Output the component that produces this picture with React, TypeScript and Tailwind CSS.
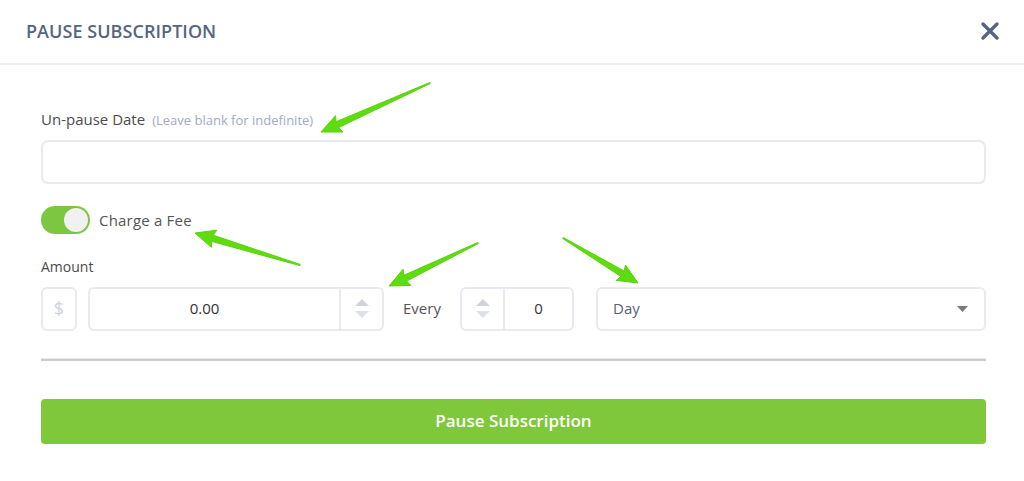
type Pt = [number, number];

// green annotation arrow, tapered shaft with a triangular head
function Arrow({ from, to }: { from: Pt; to: Pt }) {
  const [x1, y1] = from;
  const [x2, y2] = to;
  const len = Math.hypot(x2 - x1, y2 - y1);
  const ux = (x2 - x1) / len;
  const uy = (y2 - y1) / len;
  const nx = -uy;
  const ny = ux;
  const head = 18;
  const bx = x2 - ux * head;
  const by = y2 - uy * head;
  const p = (x: number, y: number) => `${x.toFixed(1)},${y.toFixed(1)}`;
  const pts = [
    p(x1 + nx * 0.6, y1 + ny * 0.6),
    p(bx + nx * 3.2, by + ny * 3.2),
    p(bx + nx * 9 - ux * 2, by + ny * 9 - uy * 2),
    p(x2, y2),
    p(bx - nx * 9 - ux * 2, by - ny * 9 - uy * 2),
    p(bx - nx * 3.2, by - ny * 3.2),
    p(x1 - nx * 0.6, y1 - ny * 0.6),
  ].join(' ');
  return <polygon points={pts} fill="#5fdc10" stroke="#58d20c" strokeWidth="1" strokeLinejoin="round" />;
}

function StepArrows() {
  return (
    <div className="flex flex-col items-center gap-[5px]">
      <svg width="14" height="7" viewBox="0 0 14 7">
        <path d="M7 0 L14 7 L0 7 Z" fill="#cfd3dc" />
      </svg>
      <svg width="14" height="7" viewBox="0 0 14 7">
        <path d="M0 0 L14 0 L7 7 Z" fill="#dde0e6" />
      </svg>
    </div>
  );
}

export default function App() {
  return (
    <div
      className="relative w-[1024px] h-[481px] bg-white overflow-hidden text-[#4a4a4a]"
      style={{ fontFamily: '"Open Sans", "Noto Sans", sans-serif' }}
    >
      {/* Header */}
      <div className="h-[65px] pl-[26px] pr-[24px] flex items-center justify-between border-b-2 border-[#e9ecf1]">
        <h2 className="text-[18px] font-semibold tracking-[0.05px] text-[#56657f]">PAUSE SUBSCRIPTION</h2>
        <svg width="20" height="20" viewBox="0 0 20 20" className="mb-[2px]">
          <path d="M3 3 L17 17 M17 3 L3 17" stroke="#56657f" strokeWidth="3.4" strokeLinecap="round" />
        </svg>
      </div>

      <div className="pl-[41px] pr-[38px] pt-[43px]">
        {/* Un-pause date */}
        <div className="flex items-baseline gap-[7px] mb-[9px]">
          <span className="text-[15px] text-[#4b4b4b]">Un-pause Date</span>
          <span className="text-[13px] text-[#a2a9c4]">(Leave blank for indefinite)</span>
        </div>
        <div className="h-[44px] w-full rounded-[7px] border-2 border-[#e8eaf0]" />

        {/* Charge a fee */}
        <div className="flex items-center gap-[9px] mt-[22px] h-[29px]">
          <div className="w-[49px] h-[28px] rounded-full bg-[#7dc740] flex items-center justify-end pr-[2px]">
            <div className="w-[24px] h-[24px] rounded-full bg-[#f1f1f1]" />
          </div>
          <span className="text-[15px] text-[#555] tracking-[0.2px]">Charge a Fee</span>
        </div>

        {/* Amount */}
        <div className="text-[14px] text-[#4b4b4b] mt-[22px] mb-[10px] leading-[20px]">Amount</div>
        <div className="flex items-center h-[44px]">
          <div className="w-[36px] h-[44px] rounded-[6px] border-2 border-[#e8eaf0] flex items-center justify-center text-[18px] text-[#cdd2de]">
            $
          </div>
          <div className="ml-[11px] w-[296px] h-[44px] rounded-[6px] border-2 border-[#e8eaf0] flex">
            <div className="flex-1 flex items-center justify-center pr-[20px] text-[15px] text-[#333]">0.00</div>
            <div className="w-[43px] border-l-2 border-[#e8eaf0] flex items-center justify-center">
              <StepArrows />
            </div>
          </div>
          <span className="ml-[19px] w-[57px] text-[15px] text-[#555]">Every</span>
          <div className="w-[114px] h-[44px] rounded-[6px] border-2 border-[#e8eaf0] flex">
            <div className="w-[43px] border-r-2 border-[#e8eaf0] flex items-center justify-center">
              <StepArrows />
            </div>
            <div className="flex-1 flex items-center justify-center text-[15px] text-[#333]">0</div>
          </div>
          <div className="ml-[22px] flex-1 h-[44px] rounded-[6px] border-2 border-[#e8eaf0] flex items-center justify-between pl-[15px] pr-[16px]">
            <span className="text-[15px] text-[#5b6172]">Day</span>
            <svg width="11" height="6" viewBox="0 0 11 6">
              <path d="M0 0 L11 0 L5.5 6 Z" fill="#7a7a7a" />
            </svg>
          </div>
        </div>

        <div className="mt-[27px] h-[3px] bg-[#cccccc] border-t border-[#e8e8e8]" />

        <button className="mt-[38px] w-full h-[45px] rounded-[4px] bg-[#80c83b] text-white text-[17px] font-semibold flex items-center justify-center">
          Pause Subscription
        </button>
      </div>

      {/* annotation arrows */}
      <svg className="absolute inset-0 pointer-events-none" width="1024" height="481">
        <Arrow from={[430, 83]} to={[321, 132]} />
        <Arrow from={[300, 265]} to={[195, 233]} />
        <Arrow from={[478, 243]} to={[389, 286]} />
        <Arrow from={[563, 238]} to={[638, 283]} />
      </svg>
    </div>
  );
}
